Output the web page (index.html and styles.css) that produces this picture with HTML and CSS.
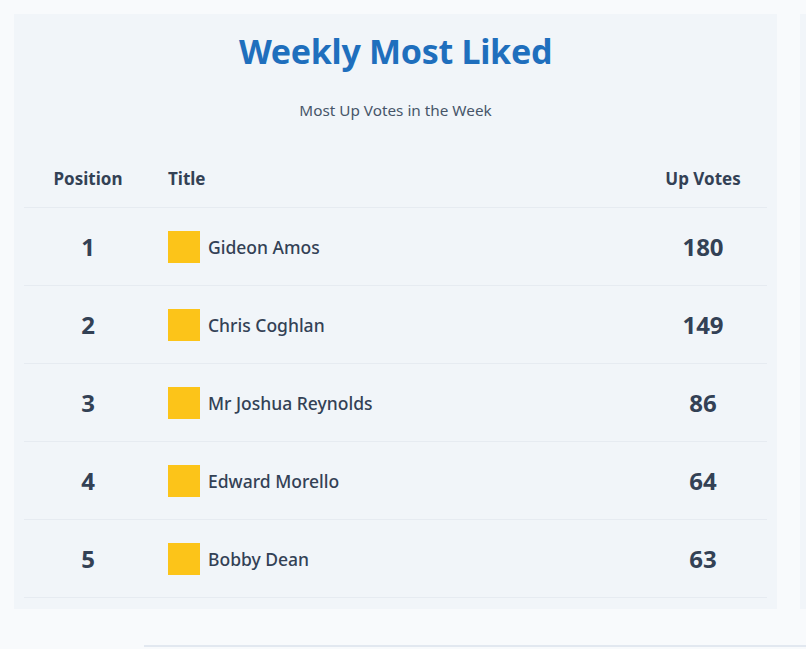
FILE: index.html
```html
<!DOCTYPE html>
<html lang="en">
<head>
<meta charset="utf-8">
<title>Weekly Most Liked</title>
<link rel="stylesheet" href="styles.css">
</head>
<body>
<div class="page">
  <section class="card">
    <h1 class="title">Weekly Most Liked</h1>
    <p class="subtitle">Most Up Votes in the Week</p>
    <div class="table">
      <div class="row head">
        <div class="c-pos">Position</div>
        <div class="c-title">Title</div>
        <div class="c-votes">Up Votes</div>
      </div>
      <div class="row">
        <div class="c-pos num">1</div>
        <div class="c-title"><span class="swatch"></span><span class="name">Gideon Amos</span></div>
        <div class="c-votes num">180</div>
      </div>
      <div class="row">
        <div class="c-pos num">2</div>
        <div class="c-title"><span class="swatch"></span><span class="name">Chris Coghlan</span></div>
        <div class="c-votes num">149</div>
      </div>
      <div class="row">
        <div class="c-pos num">3</div>
        <div class="c-title"><span class="swatch"></span><span class="name">Mr Joshua Reynolds</span></div>
        <div class="c-votes num">86</div>
      </div>
      <div class="row">
        <div class="c-pos num">4</div>
        <div class="c-title"><span class="swatch"></span><span class="name">Edward Morello</span></div>
        <div class="c-votes num">64</div>
      </div>
      <div class="row">
        <div class="c-pos num">5</div>
        <div class="c-title"><span class="swatch"></span><span class="name">Bobby Dean</span></div>
        <div class="c-votes num">63</div>
      </div>
    </div>
  </section>
  <aside class="side"></aside>
</div>
<div class="footer-line"></div>
</body>
</html>
```
FILE: styles.css
```css
html, body {
  margin: 0;
  padding: 0;
  background: #f8fafc;
  font-family: "Noto Sans", "Open Sans", sans-serif;
  color: #334155;
  overflow: hidden;
}

.page {
  display: flex;
  gap: 23px;
  padding: 14px 0 0 14px;
  height: 595px;
}

.card {
  width: 763px;
  flex: none;
  background: #f1f5f9;
  padding: 10px 10px 11px;
  box-sizing: border-box;
  height: 595px;
}

.side {
  flex: 1;
  background: #f1f5f9;
}

.title {
  margin: 7px 0 0;
  text-align: center;
  font-size: 34px;
  line-height: 40px;
  font-weight: 700;
  color: #1f6fbd;
  letter-spacing: -0.3px;
}

.subtitle {
  margin: 29px 0 0;
  text-align: center;
  font-size: 15.3px;
  line-height: 20px;
  color: #475569;
}

.table {
  margin-top: 35px;
}

.row {
  display: grid;
  grid-template-columns: 128px 1fr 128px;
  align-items: center;
  height: 78px;
  border-bottom: 1px solid #e6ebf1;
  box-sizing: border-box;
}

.row.head {
  height: 53px;
  font-size: 17px;
  font-weight: 700;
  align-items: start;
  padding-top: 12px;
}

.c-pos, .c-votes {
  text-align: center;
}

.c-title {
  padding-left: 16px;
  display: flex;
  align-items: center;
  gap: 8px;
}

.num {
  font-size: 24px;
  font-weight: 700;
}

.swatch {
  width: 32px;
  height: 32px;
  background: #fcc419;
  flex: none;
}

.name {
  font-size: 17.5px;
  font-weight: 500;
}

.footer-line {
  margin: 36px 0 0 144px;
  height: 2px;
  background: #e2e8f0;
}
```
